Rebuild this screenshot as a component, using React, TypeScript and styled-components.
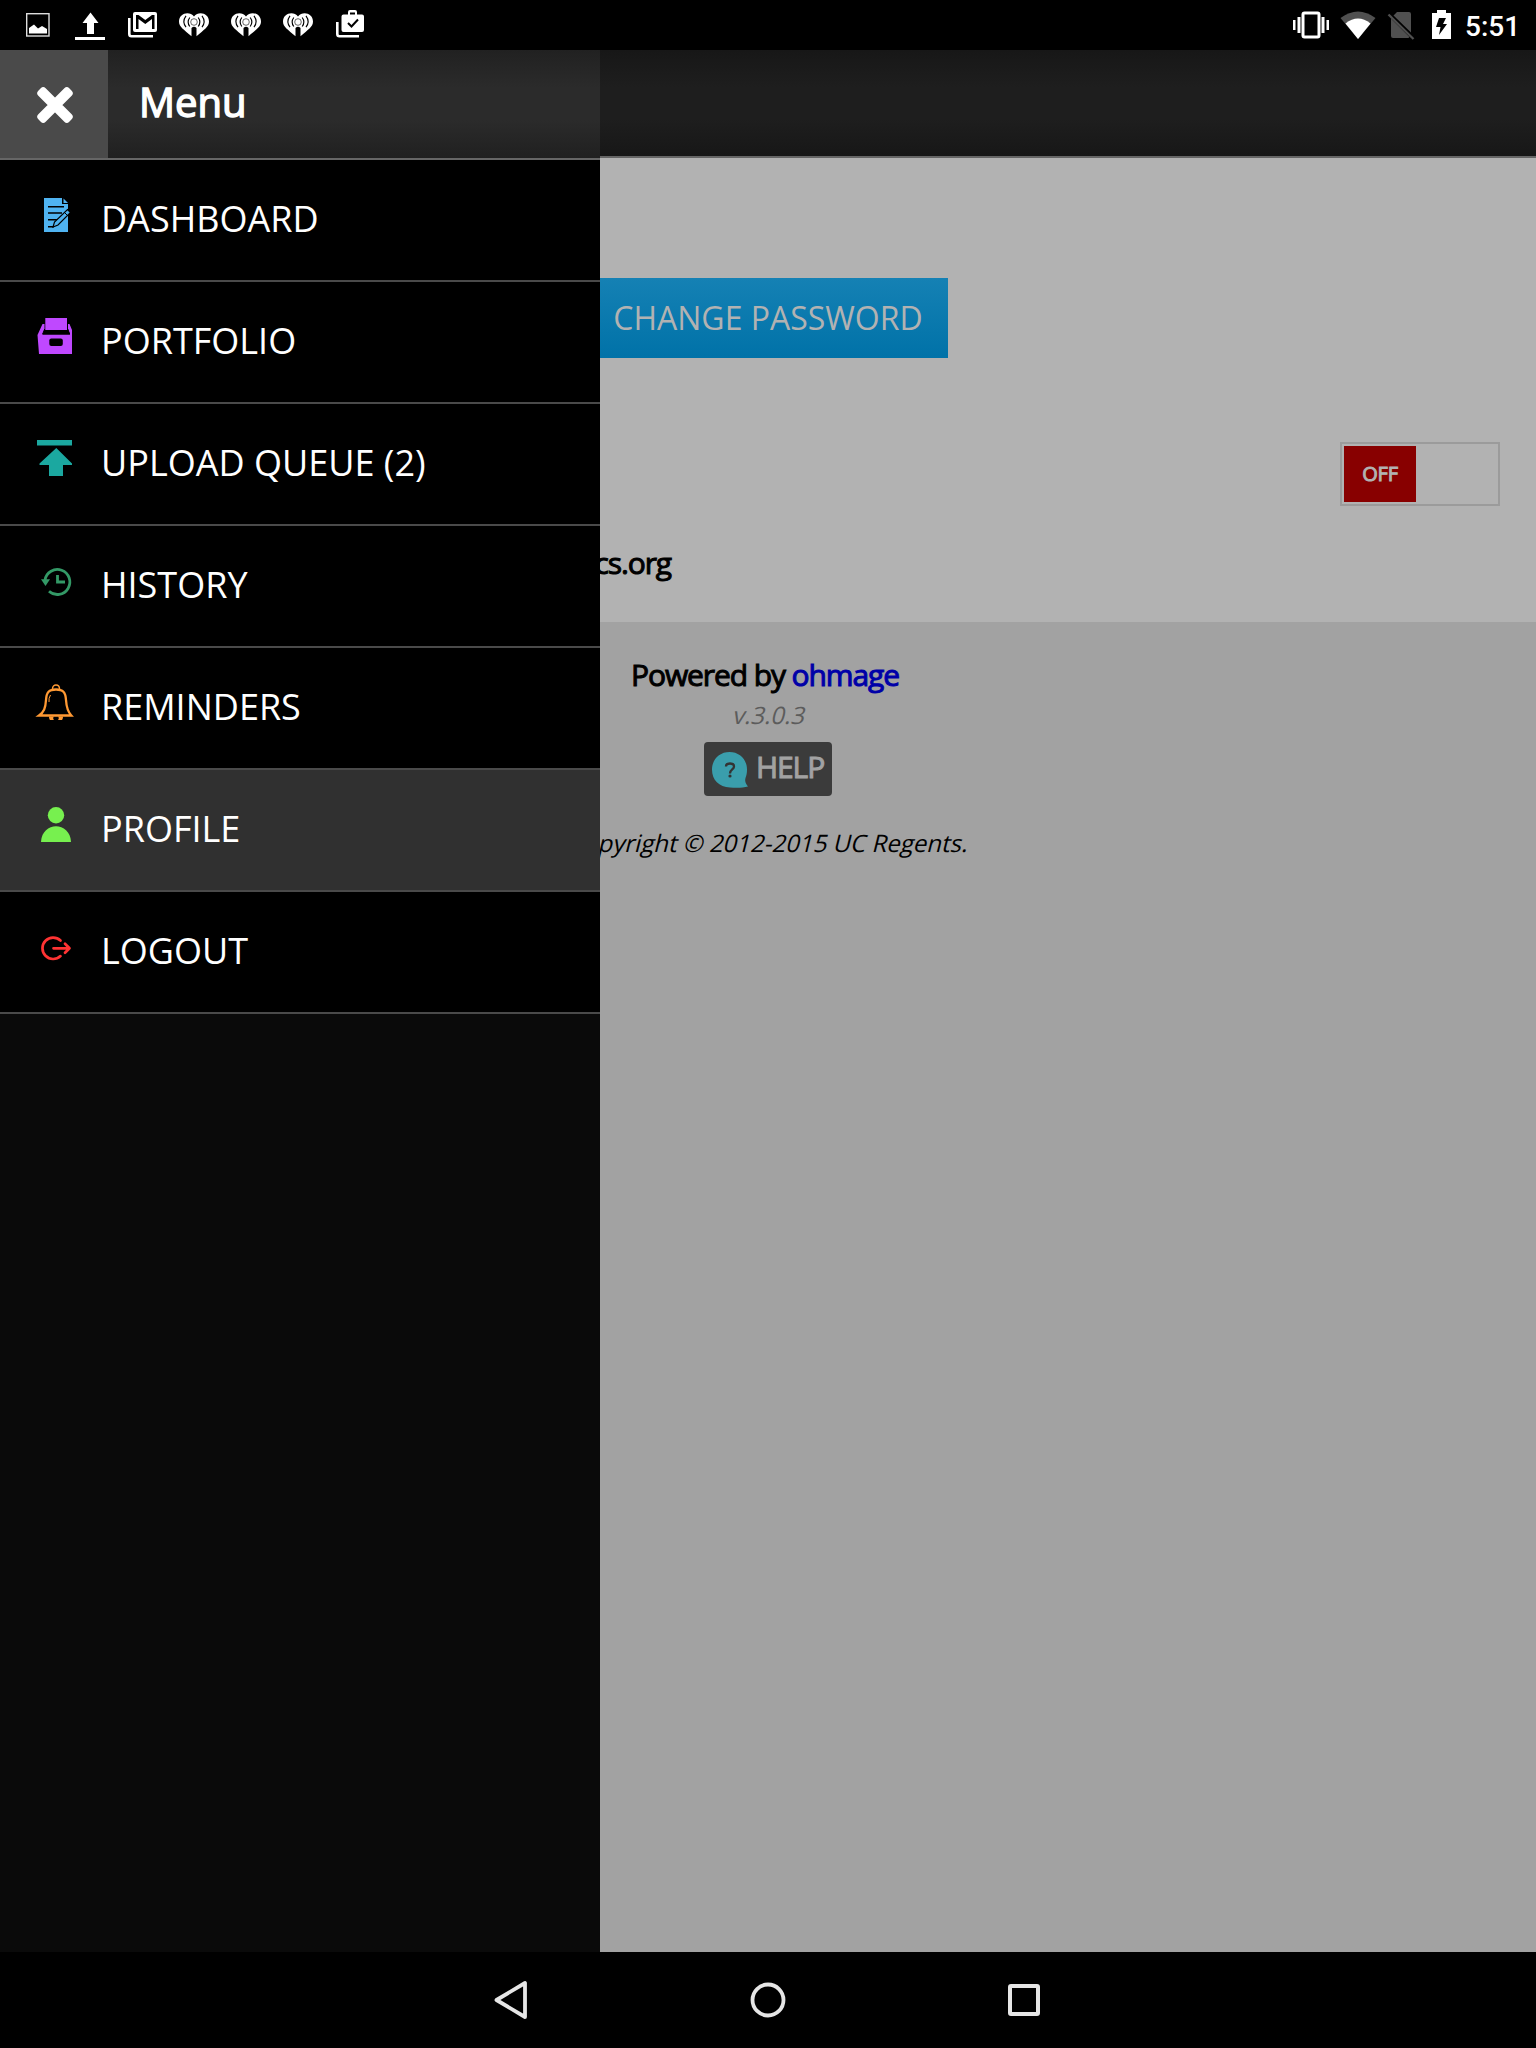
import React from 'react';
import styled, { createGlobalStyle } from 'styled-components';

const Global = createGlobalStyle`
  * { box-sizing: border-box; }
  body { margin: 0; background: #000; font-family: "Open Sans", sans-serif; }
  svg { display: block; }
`;

const Screen = styled.div`
  width: 1536px;
  height: 2048px;
  display: flex;
  flex-direction: column;
  overflow: hidden;
`;

const StatusBar = styled.header`
  height: 50px;
  flex: none;
  background: #000;
  display: flex;
  justify-content: space-between;
`;

const StatusIcons = styled.div`
  display: flex;
`;

const Clock = styled.div`
  width: 71px;
  font: 500 28px/53px Roboto, sans-serif;
  color: #fff;
`;

const Body = styled.div`
  flex: 1;
  position: relative;
  display: flex;
  min-height: 0;
`;

const Page = styled.main`
  width: 1536px;
  display: flex;
  flex-direction: column;
  background: #a2a2a2;
`;

const PageHeader = styled.div`
  height: 108px;
  background: linear-gradient(#171717, #1e1e1e 35%, #1e1e1e 65%, #171717);
  border-bottom: 2px solid #666;
`;

const Content = styled.section`
  height: 464px;
  background: #b2b2b2;
  display: flex;
  flex-direction: column;
  padding: 120px 36px 0;
`;

const PrimaryButton = styled.button`
  align-self: center;
  width: 360px;
  height: 80px;
  border: 0;
  padding: 0;
  background: linear-gradient(#1581b4, #0072a8);
  color: #b2b2b2;
  font: 32px/80px "Open Sans", sans-serif;
`;

const Toggle = styled.div`
  align-self: flex-end;
  width: 160px;
  height: 64px;
  margin-top: 84px;
  border: 2px solid #9b9b9b;
  padding: 2px;
`;

const Knob = styled.div`
  width: 72px;
  height: 56px;
  background: #880000;
  color: #b2b2b2;
  font-size: 20px;
  line-height: 56px;
  letter-spacing: -0.2px;
  text-align: center;
  -webkit-text-stroke: 1px;
`;

const Heavy = styled.div`
  font-size: 30px;
  letter-spacing: -1.1px;
  line-height: 40px;
  color: #000;
  -webkit-text-stroke: 1px;
`;

const Server = styled(Heavy)`
  width: 635px;
  margin-top: 37px;
  text-align: right;
`;

const Footer = styled.footer`
  display: flex;
  flex-direction: column;
  align-items: center;
  padding-top: 33px;
`;

const Powered = styled(Heavy)`
  padding-right: 6px;
`;

const Link = styled.a`
  color: #0000a8;
`;

const Slanted = styled.div<{ $color: string; $top: number }>`
  margin-top: ${p => p.$top}px;
  font-size: 24px;
  line-height: 32px;
  color: ${p => p.$color};
  transform: translateX(2px) skewX(-14deg);
`;

const HelpButton = styled.button`
  width: 128px;
  height: 54px;
  margin: 11px 0 0;
  border: 0;
  border-radius: 4px;
  padding: 0 0 0 8px;
  background: #3b3b3b;
  display: flex;
  gap: 6px;
`;

const HelpText = styled(Heavy)`
  font-family: "Open Sans", sans-serif;
  line-height: 50px;
  color: #a2a2a2;
`;

const Drawer = styled.aside`
  position: absolute;
  left: 0;
  top: 0;
  bottom: 0;
  width: 600px;
  background: #0a0a0a;
`;

const DrawerHeader = styled.div`
  height: 110px;
  display: flex;
  background: linear-gradient(#212121, #2b2b2b 35%, #2b2b2b 65%, #202020);
  border-bottom: 2px solid #666;
`;

const CloseButton = styled.div`
  width: 108px;
  height: 108px;
  background: #4a4a4a;
  display: flex;
  align-items: center;
  justify-content: center;
  padding: 1px 0 0 1px;
`;

const Title = styled.h1`
  margin: 0 0 0 31px;
  font-size: 40px;
  font-weight: 400;
  line-height: 104px;
  color: #fff;
  -webkit-text-stroke: 1.4px;
`;

const MenuItem = styled.div<{ $active?: boolean }>`
  height: 122px;
  border-bottom: 2px solid #4a4a4a;
  background: ${p => (p.$active ? '#303030' : '#000')};
  display: flex;
  padding-left: 36px;
`;

const MenuIcon = styled.svg`
  width: 40px;
  height: 40px;
  margin-top: 38px;
  flex: none;
`;

const MenuLabel = styled.span`
  margin-left: 25px;
  font-size: 36px;
  line-height: 118px;
  color: #fff;
`;

const NavBar = styled.nav`
  height: 96px;
  flex: none;
  background: #000;
  display: flex;
  justify-content: center;
  align-items: center;
`;

const NavSlot = styled.div`
  width: 256px;
  display: flex;
  justify-content: center;
`;

/* Menu icons share a 40-unit box whose origin is 36px from the left edge and 38px below the row's top. */
const items = [
  { label: 'DASHBOARD', icon: (
    <>
      <path fill="#4fb3f1" d="M8 0H26V6H32V34H8Z" />
      <path fill="#4fb3f1" d="M27.500 0.500L32 5H27.500Z" />
      <path stroke="#000" strokeWidth="1.400" fill="none" d="M12 8.700H28M12 15H26M12 21.700H22M12 28.700H18" />
      <path fill="#4fb3f1" stroke="#000" strokeWidth="1.200" d="M31.500 11.500L34.500 14.500L22 27L17 29L18.500 24Z" />
      <path stroke="#000" strokeWidth="1" d="M28.500 14.500L31.500 17.500" />
    </>
  ) },
  { label: 'PORTFOLIO', icon: (
    <>
      <path fill="#bf48ff" d="M9.300 -2H31V10.500H9.300Z" />
      <path fill="#bf48ff" d="M6.500 4H8.500V9L6.500 14.500H34L32 9V4H33.500L36 10V34H3L1.500 15Z" />
      <path stroke="#000" strokeWidth="1" fill="none" d="M8.500 10.500H32M6.500 14H34M8.700 9L6.700 14M31.700 9L33.700 14" />
      <rect x="13.300" y="18.500" width="13.500" height="7.500" rx="2" />
    </>
  ) },
  { label: 'UPLOAD QUEUE (2)', icon: (
    <path fill="#1ba8a0" d="M1 -2H36V3.500H1ZM20.300 6L36 21.500V23H27V34H13V23H3.500V21.500Z" />
  ) },
  { label: 'HISTORY', icon: (
    <>
      <path fill="none" stroke="#339966" strokeWidth="2.800" d="M9 16A12.500 12.500 0 1 1 13 27.300" />
      <path fill="#339966" d="M5 15.300H14L9.500 22Z" />
      <path fill="none" stroke="#339966" strokeWidth="2.800" d="M21.500 11V18H29" />
    </>
  ) },
  { label: 'REMINDERS', icon: (
    <>
      <path fill="none" stroke="#ff9933" strokeWidth="2.300" d="M3 29.500C8 26 9.500 22 10 14C10.500 6 13 3.500 20 3.500S29.500 6 30 14C30.500 22 32 26 35.300 29.500Z" />
      <path fill="none" stroke="#ff9933" strokeWidth="1.500" d="M16.500 3C16.500 -2.300 23.500 -2.300 23.500 3" />
      <path fill="#ff9933" d="M13 30.500H18C16.500 32 17.500 34 18.500 34H14C13.300 33 13 32 13 30.500ZM22 30.500H27C27 32 26.700 33 26 34H21.500C22.500 34 23.500 32 22 30.500Z" />
      <path fill="none" stroke="#ff9933" strokeWidth="1" d="M14.500 9Q12.500 12 13 16" />
    </>
  ) },
  { label: 'PROFILE', active: true, icon: (
    <>
      <circle cx="20" cy="7.300" r="8.200" fill="#77f04f" />
      <path fill="#77f04f" d="M5 34C6 13 34 13 35 34Z" />
    </>
  ) },
  { label: 'LOGOUT', icon: (
    <g fill="none" stroke="#ff3333" strokeWidth="2.700" strokeLinecap="round" strokeLinejoin="round">
      <path d="M24.500 10.500A10.700 10.700 0 1 0 24.500 26.100" />
      <path d="M17.500 18.300H33M29 13.800L33.500 18.300L29 22.800" />
    </g>
  ) },
];

const Heart = ({ x }: { x: number }) => (
  <g transform={`translate(${x} 0)`} fill="none">
    <path fill="#fff" d="M15 16.500C10.500 10.500 0 13 0 21.500C0 27 5 29.500 12.500 36.300V28A3.500 3.500 0 0 1 17.500 28V36.300C25 29.500 30 27 30 21.500C30 13 19.500 10.500 15 16.500Z" />
    <circle cx="15" cy="22" r="3.300" stroke="#000" strokeWidth="0.600" fill="#fff" />
    <path stroke="#000" strokeWidth="1.150" d="M10.800 17.500Q7.500 22 10.800 26.500M7 15.800Q2.800 21.500 7 27.200M19.200 17.500Q22.500 22 19.200 26.500M23 15.800Q27.200 21.500 23 27.200" />
  </g>
);

export default function App() {
  return (
    <Screen>
      <Global />
      <StatusBar>
        <StatusIcons>
          <svg width="380" height="50" viewBox="0 0 380 50" fill="#fff">
            <rect x="26.700" y="13.700" width="22.300" height="22.300" fill="none" stroke="#ddd" strokeWidth="1.400" />
            <path d="M29 33.500V28L34 24.500L38 28.500L42 26L47 29V33.500Z" />
            <path d="M90.500 12.500L98.500 23H94V34H87V23H82.500ZM75 37H105V40H75Z" />
            <path fillRule="evenodd" d="M135 12H155Q157 12 157 14V30Q157 32 155 32H135Q133 32 133 30V14Q133 12 135 12ZM136 15V29H138.500V19L145.300 24L152 19V29H154.500V15H152L145.300 20L138.500 15Z" />
            <path fill="none" stroke="#fff" strokeWidth="2.600" d="M129.300 18V34Q129.300 36.300 131.500 36.300H153" />
            <Heart x={179} /><Heart x={231} /><Heart x={283} />
            <path fillRule="evenodd" d="M343.500 14.500H348V12Q348 10 350 10H355Q357 10 357 12V14.500H362Q364 14.500 364 16.500V30Q364 32 362 32H343.500Q341.500 32 341.500 30V16.500Q341.500 14.500 343.500 14.500ZM350 14.500H355V12.500H350Z" />
            <path fill="none" stroke="#000" strokeWidth="2" d="M348 23L351.500 26.500L358 19.500" />
            <path fill="none" stroke="#fff" strokeWidth="2.600" d="M337.300 22V34Q337.300 36.300 339.500 36.300H359" />
          </svg>
        </StatusIcons>
        <StatusIcons>
          <svg width="177" height="50" viewBox="1288 0 177 50">
            <rect x="1303" y="13" width="16" height="24" rx="1.500" fill="none" stroke="#fff" strokeWidth="3" />
            <path fill="#fff" d="M1293 20H1295.500V30H1293ZM1297.500 17H1300.500V33H1297.500ZM1321.500 17H1324.500V33H1321.500ZM1326.500 20H1329V30H1326.500Z" />
            <path fill="#505050" d="M1340.500 18Q1358 5 1375.500 18L1358 39Z" />
            <path fill="#fff" d="M1345.500 23.500Q1358 13.500 1370.500 23.500L1358 39Z" />
            <path fill="#505050" d="M1397 12H1409Q1411 12 1411 14V32.500L1393.500 15.500ZM1391 18.500L1409.500 37Q1409 38 1408 38H1393Q1391 38 1391 36Z" />
            <path stroke="#505050" strokeWidth="2.300" d="M1388.500 14.500L1413.500 39" />
            <path fill="#fff" d="M1437 10H1446V13H1451V39H1432V13H1437Z" />
            <path d="M1439 18H1446L1443 24H1447L1439 35L1440.500 27H1436Z" />
          </svg>
          <Clock>5:51</Clock>
        </StatusIcons>
      </StatusBar>
      <Body>
        <Page>
          <PageHeader />
          <Content>
            <PrimaryButton>CHANGE PASSWORD</PrimaryButton>
            <Toggle><Knob>OFF</Knob></Toggle>
            <Server>cs.org</Server>
          </Content>
          <Footer>
            <Powered>Powered by <Link>ohmage</Link></Powered>
            <Slanted $color="#5c5c5c" $top={4}>v.3.0.3</Slanted>
            <HelpButton>
              <svg width="38" height="54" viewBox="0 0 38 54">
                <path fill="#3a9eac" d="M17.500 10C7.500 10 0 17.500 0 27.500C0 38 7 45 18 45.500C24 46 31 46 36 44.500C34 42 32.500 40 33.500 36C34.500 33 35 31 35 27.500C35 17.500 27.500 10 17.500 10Z" />
                <path fill="none" stroke="#333" strokeWidth="2.300" d="M14 24.500C14 20.500 22 20.500 22 24.500C22 27.500 18 27.500 18 31.500" />
                <circle cx="18" cy="34" r="1.600" fill="#333" />
              </svg>
              <HelpText as="span">HELP</HelpText>
            </HelpButton>
            <Slanted $color="#000" $top={31}>Copyright © 2012-2015 UC Regents.</Slanted>
          </Footer>
        </Page>
        <Drawer>
          <DrawerHeader>
            <CloseButton>
              <svg width="38" height="38" viewBox="0 0 38 38">
                <path d="M5.200 5.200L32.800 32.800M32.800 5.200L5.200 32.800" stroke="#fff" strokeWidth="8.500" />
                <path d="M4.800 7.200L7.200 4.800L33.200 30.800L30.800 33.200ZM30.800 4.800L33.200 7.200L7.200 33.200L4.800 30.800Z" fill="#fff" stroke="#fff" strokeWidth="7" strokeLinejoin="round" />
              </svg>
            </CloseButton>
            <Title>Menu</Title>
          </DrawerHeader>
          {items.map(item => (
            <MenuItem key={item.label} $active={item.active}>
              <MenuIcon viewBox="0 0 40 40" overflow="visible">{item.icon}</MenuIcon>
              <MenuLabel>{item.label}</MenuLabel>
            </MenuItem>
          ))}
        </Drawer>
      </Body>
      <NavBar>
        <NavSlot>
          <svg width="36" height="42" viewBox="0 0 36 42">
            <path d="M31 4V38L2.500 21Z" fill="none" stroke="#e6e6e6" strokeWidth="3.800" strokeLinejoin="round" />
          </svg>
        </NavSlot>
        <NavSlot>
          <svg width="36" height="36" viewBox="0 0 36 36">
            <circle cx="18" cy="18" r="15.500" fill="none" stroke="#e6e6e6" strokeWidth="3.800" />
          </svg>
        </NavSlot>
        <NavSlot>
          <svg width="32" height="32" viewBox="0 0 32 32">
            <rect x="2" y="2" width="28" height="28" rx="1" fill="none" stroke="#e6e6e6" strokeWidth="4" />
          </svg>
        </NavSlot>
      </NavBar>
    </Screen>
  );
}
